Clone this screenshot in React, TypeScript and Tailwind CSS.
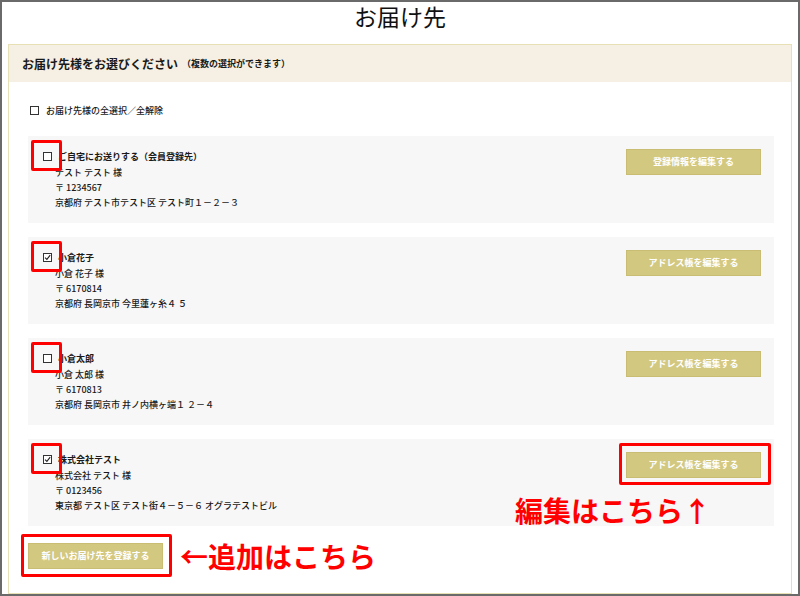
import React from "react";

type Item = {
  name: string;
  lines: string[];
  checked: boolean;
  button: string;
};

const items: Item[] = [
  {
    name: "ご自宅にお送りする（会員登録先）",
    lines: ["テスト テスト 様", "〒 1234567", "京都府 テスト市テスト区 テスト町１－２－３"],
    checked: false,
    button: "登録情報を編集する",
  },
  {
    name: "小倉花子",
    lines: ["小倉 花子 様", "〒 6170814", "京都府 長岡京市 今里蓮ヶ糸４ ５"],
    checked: true,
    button: "アドレス帳を編集する",
  },
  {
    name: "小倉太郎",
    lines: ["小倉 太郎 様", "〒 6170813", "京都府 長岡京市 井ノ内横ヶ端１ ２－４"],
    checked: false,
    button: "アドレス帳を編集する",
  },
  {
    name: "株式会社テスト",
    lines: ["株式会社 テスト 様", "〒 0123456", "東京都 テスト区 テスト街４－５－６ オグラテストビル"],
    checked: true,
    button: "アドレス帳を編集する",
  },
];

function Box({ checked }: { checked: boolean }) {
  return (
    <span className="flex h-[9px] w-[9px] shrink-0 items-center justify-center border border-[#333] bg-white">
      {checked && (
        <svg width="7" height="7" viewBox="0 0 7 7" fill="none">
          <path d="M1 3.6 L2.9 5.4 L6.2 1.2" stroke="#222" strokeWidth="1.1" />
        </svg>
      )}
    </span>
  );
}

export default function App() {
  return (
    <div
      className="relative h-[596px] w-[800px] overflow-hidden border-2 border-[#6a6a6a] bg-white text-[#1a1a1a]"
      style={{ fontFamily: '"Noto Sans CJK JP", "Noto Sans", sans-serif' }}
    >
      <div className="flex h-[42px] items-start justify-center">
        <h1 className="mt-[-1px] text-[23px] font-normal leading-[30px] text-[#111]">お届け先</h1>
      </div>

      <div className="mx-[6px] border border-[#e6e0b4]">
        <div className="flex h-[37px] items-center bg-[#f5f0e3] px-[13px]">
          <span className="text-[12px] font-bold leading-none">お届け先様をお選びください</span>
          <span className="ml-[4px] text-[9px] font-bold leading-none">（複数の選択ができます）</span>
        </div>

        <div className="pl-[19px] pr-[17px] pb-[19px]">
          <div className="mt-[22px] mb-[20px] flex h-[12px] items-center gap-[7px] pl-[2px]">
            <Box checked={false} />
            <span className="text-[9px] font-medium leading-none">お届け先様の全選択／全解除</span>
          </div>

          <div className="flex flex-col gap-[14px]">
            {items.map((it, i) => (
              <div key={i} className="relative flex h-[87px] justify-between bg-[#f7f7f7] pl-[15px] pr-[13px] pt-[13px]">
                <div>
                  <div className="flex h-[14px] items-center gap-[6px]">
                    <Box checked={it.checked} />
                    <span className="text-[9px] font-bold leading-none">{it.name}</span>
                  </div>
                  <div className="mt-[2px] pl-[12px] text-[9px] font-medium leading-[15px]">
                    {it.lines.map((l, j) => (
                      <div key={j}>{l}</div>
                    ))}
                  </div>
                </div>
                <button className="flex h-[26px] w-[135px] items-center justify-center border border-[#c9bd73] bg-[#d3c87f] text-[9px] font-bold text-white">
                  {it.button}
                </button>

                <div className="pointer-events-none absolute left-[3px] top-[4px] h-[31px] w-[31px] rounded-[2px] border-[3px] border-[#ff0000]" />
                {i === 3 && (
                  <>
                    <div className="pointer-events-none absolute right-[3px] top-[4px] h-[42px] w-[152px] rounded-[2px] border-[3px] border-[#ff0000]" />
                    <div className="pointer-events-none absolute left-[487px] top-[53px] text-[28px] font-bold leading-[36px] text-[#ff0000]">
                      編集はこちら↑
                    </div>
                  </>
                )}
              </div>
            ))}
          </div>

          <div className="mt-[12px] flex items-center">
            <div className="relative">
              <button className="flex h-[26px] w-[135px] items-center justify-center border border-[#c9bd73] bg-[#d3c87f] text-[9px] font-bold text-white">
                新しいお届け先を登録する
              </button>
              <div className="pointer-events-none absolute left-[-7px] top-[-9px] h-[43px] w-[151px] rounded-[2px] border-[3px] border-[#ff0000]" />
            </div>
            <span className="ml-[17px] text-[28px] font-bold leading-[36px] text-[#ff0000]">←追加はこちら</span>
          </div>
        </div>
      </div>
    </div>
  );
}
